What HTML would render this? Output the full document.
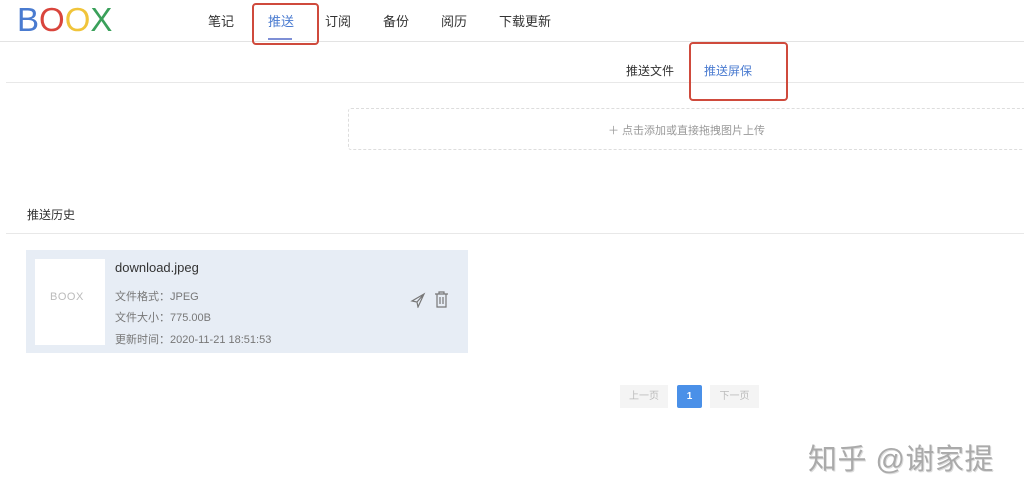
<!DOCTYPE html>
<html><head><meta charset="utf-8"><style>
body{margin:0;width:1024px;height:500px;background:#fff;position:relative;overflow:hidden;font-family:"Liberation Sans","Noto Sans CJK SC",sans-serif;}
.a{position:absolute;white-space:nowrap;}
.nav{top:11px;font-size:13px;color:#333;}
.g{color:#777;font-size:11px;}
</style></head><body>
<div class="a" style="left:17px;top:3px;font-size:33px;font-weight:400;letter-spacing:0px;line-height:34px"><span style="color:#4a7bd0">B</span><span style="color:#d9453c">O</span><span style="color:#f0c43a">O</span><span style="color:#3aa05a">X</span></div>
<div class="a nav" style="left:208px">笔记</div>
<div class="a nav" style="left:268px;color:#4a7bd0">推送</div>
<div class="a" style="left:268px;top:38px;width:24px;height:2px;background:#7e8fd6"></div>
<div class="a nav" style="left:325px">订阅</div>
<div class="a nav" style="left:383px">备份</div>
<div class="a nav" style="left:441px">阅历</div>
<div class="a nav" style="left:499px">下载更新</div>
<div class="a" style="left:0;top:41px;width:1024px;height:1px;background:#e3e3e3"></div>
<div class="a" style="left:252px;top:3px;width:63px;height:38px;border:2px solid #cf4a3c;border-radius:4px"></div>
<div class="a" style="left:6px;top:82px;width:1018px;height:1px;background:#e8e8e8"></div>
<div class="a" style="left:626px;top:62px;font-size:12px;color:#333">推送文件</div>
<div class="a" style="left:704px;top:62px;font-size:12px;color:#4a7bd0">推送屏保</div>
<div class="a" style="left:689px;top:42px;width:95px;height:55px;border:2px solid #cf4a3c;border-radius:4px"></div>
<div class="a" style="left:348px;top:108px;width:680px;height:40px;border:1px dashed #ddd;border-radius:3px"></div>
<div class="a" style="left:608px;top:122px;font-size:11px;color:#999">＋ 点击添加或直接拖拽图片上传</div>
<div class="a" style="left:27px;top:206px;font-size:12px;color:#333">推送历史</div>
<div class="a" style="left:6px;top:233px;width:1018px;height:1px;background:#e8e8e8"></div>
<div class="a" style="left:26px;top:250px;width:442px;height:103px;background:#e7edf5"></div>
<div class="a" style="left:35px;top:259px;width:70px;height:86px;background:#fff"></div>
<div class="a" style="left:50px;top:291px;font-size:11px;color:#bbb;letter-spacing:0.5px">BOOX</div>
<div class="a" style="left:115px;top:260px;font-size:13px;color:#333">download.jpeg</div>
<div class="a g" style="left:115px;top:288px">文件格式：JPEG</div>
<div class="a g" style="left:115px;top:309px">文件大小：775.00B</div>
<div class="a g" style="left:115px;top:331px">更新时间：2020-11-21 18:51:53</div>
<svg class="a" style="left:410px;top:292px" width="16" height="16" viewBox="0 0 16 16" fill="none" stroke="#777" stroke-width="1.2"><path d="M14 2L2 9l5 1 1 5z M7 10l7-8"/></svg>
<svg class="a" style="left:434px;top:291px" width="15" height="17" viewBox="0 0 15 17" fill="none" stroke="#777" stroke-width="1.2"><path d="M1 3h13M5 3V1h5v2M3 3v13h9V3M6 6v7M9 6v7"/></svg>
<div class="a" style="left:620px;top:385px;width:48px;height:23px;background:#f4f4f4;color:#bbb;font-size:10px;line-height:23px;text-align:center">上一页</div>
<div class="a" style="left:677px;top:385px;width:25px;height:23px;background:#4a90e8;color:#fff;font-size:10px;font-weight:bold;line-height:23px;text-align:center;border-radius:2px">1</div>
<div class="a" style="left:710px;top:385px;width:49px;height:23px;background:#f4f4f4;color:#bbb;font-size:10px;line-height:23px;text-align:center">下一页</div>
<div class="a" style="left:808px;top:436px;font-size:29px;letter-spacing:0.5px;color:#aaa;text-shadow:1px 1px 0 #ddd">知乎 @谢家提</div>
</body></html>
